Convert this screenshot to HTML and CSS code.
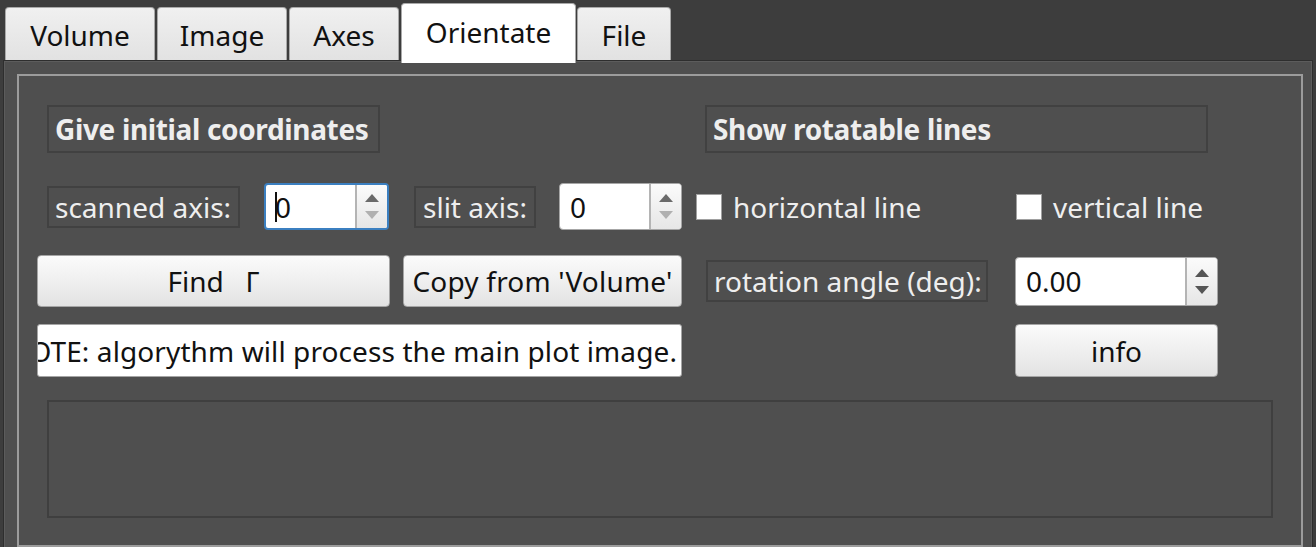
FILE: index.html
```html
<!DOCTYPE html>
<html>
<head>
<meta charset="utf-8">
<link rel="stylesheet" href="styles.css">
</head>
<body>
<div class="tabbar">
  <div class="tab t-volume">Volume</div>
  <div class="tab t-image">Image</div>
  <div class="tab t-axes">Axes</div>
  <div class="tab active t-orient">Orientate</div>
  <div class="tab t-file">File</div>
</div>
<div class="pane">
  <div class="frame">
    <div class="row r1">
      <div class="label bold lab-give">Give initial coordinates</div>
      <div class="label bold lab-show">Show rotatable lines</div>
    </div>
    <div class="row r2">
      <div class="cell">
        <div class="label lab-scan">scanned axis:</div>
        <div class="spin focus spin-a">
          <div class="spin-text"><span class="caret"></span>0</div>
          <div class="spin-btns">
            <svg class="arr" width="14" height="8" viewBox="0 0 14 8"><path d="M7 0 L14 8 L0 8 Z" fill="#6a6a6a"/></svg>
            <svg class="arr" width="14" height="8" viewBox="0 0 14 8"><path d="M0 0 L14 0 L7 8 Z" fill="#b0b0b0"/></svg>
          </div>
        </div>
      </div>
      <div class="cell">
        <div class="label lab-slit">slit axis:</div>
        <div class="spin spin-b">
          <div class="spin-text">0</div>
          <div class="spin-btns">
            <svg class="arr" width="14" height="8" viewBox="0 0 14 8"><path d="M7 0 L14 8 L0 8 Z" fill="#6a6a6a"/></svg>
            <svg class="arr" width="14" height="8" viewBox="0 0 14 8"><path d="M0 0 L14 0 L7 8 Z" fill="#b0b0b0"/></svg>
          </div>
        </div>
      </div>
      <div class="cell check check-h"><span class="box"></span>horizontal line</div>
      <div class="cell check check-v"><span class="box"></span>vertical line</div>
    </div>
    <div class="row r3">
      <div class="btn btn-find">Find   Γ</div>
      <div class="btn btn-copy">Copy from 'Volume'</div>
      <div class="cell">
        <div class="label lab-rot">rotation angle (deg):</div>
      </div>
      <div class="spin spin-c">
        <div class="spin-text">0.00</div>
        <div class="spin-btns">
          <svg class="arr" width="14" height="8" viewBox="0 0 14 8"><path d="M7 0 L14 8 L0 8 Z" fill="#555"/></svg>
          <svg class="arr" width="14" height="8" viewBox="0 0 14 8"><path d="M0 0 L14 0 L7 8 Z" fill="#555"/></svg>
        </div>
      </div>
    </div>
    <div class="row r4">
      <div class="lineedit"><span>NOTE: algorythm will process the main plot image.</span></div>
      <div class="btn btn-info">info</div>
    </div>
    <div class="group"></div>
  </div>
</div>
</body>
</html>
```
FILE: styles.css
```css
html, body {
  margin: 0;
  padding: 0;
  background: #3d3d3d;
  overflow: hidden;
  font-family: "Noto Sans", "Open Sans", sans-serif;
  font-size: 28px;
  color: #111;
}

.tabbar {
  display: flex;
  align-items: flex-end;
  height: 60px;
  padding-left: 5px;
  gap: 2px;
}

.tab {
  box-sizing: border-box;
  height: 53px;
  line-height: 54px;
  text-align: center;
  background: linear-gradient(#f0f0f0, #e2e2e2);
  border: 1px solid #a9a9a9;
  border-bottom: none;
  border-radius: 4px 4px 0 0;
  color: #111;
}

.t-volume { width: 150px; }
.t-image { width: 130px; }
.t-axes { width: 110px; }
.t-orient { width: 175px; }
.t-file { width: 94px; margin-left: -1px; }

.tab.active {
  height: 60px;
  margin-bottom: -3px;
  line-height: 56px;
  background: #ffffff;
  position: relative;
  z-index: 1;
}

.pane {
  margin-left: 3px;
  width: 1310px;
  box-sizing: border-box;
  border: 1px solid #2e2e2e;
  box-shadow: inset 1px 1px 0 #5c5c5c, inset -1px 0 0 #5c5c5c;
  background: #4f4f4f;
  padding: 13px 9px 0 13px;
}

.frame {
  box-sizing: border-box;
  height: 473px;
  border: 2px solid #9c9c9c;
  padding: 0 0 0 18px;
}

.row {
  display: grid;
  grid-template-columns: 353px 279px 307px 203px;
  column-gap: 13px;
  align-items: center;
}

.r1 { margin-top: 29px; height: 48px; }
.r2 { margin-top: 30px; height: 47px; }
.r3 { margin-top: 25px; height: 52px; }
.r4 { margin-top: 17px; height: 53px; }

.cell {
  display: flex;
  align-items: center;
  height: 100%;
}

.label {
  box-sizing: border-box;
  border: 2px solid #414141;
  color: #eeeeee;
  padding-left: 7px;
  display: flex;
  align-items: center;
  white-space: nowrap;
  height: 42px;
}

.bold {
  font-weight: bold;
  height: 48px;
  letter-spacing: -0.35px;
  padding-left: 6px;
}

.lab-give { margin-left: 10px; width: 333px; }
.lab-show { grid-column: 3 / 5; margin-left: 10px; width: 503px; }
.lab-scan { margin-left: 10px; width: 193px; padding-left: 6px; }
.lab-slit { margin-left: 11px; width: 122px; }
.lab-rot { margin-left: 11px; width: 282px; padding-left: 6px; }

.spin {
  box-sizing: border-box;
  display: flex;
  background: #ffffff;
  border: 1px solid #a6a6a6;
  border-radius: 4px;
  height: 47px;
  overflow: hidden;
}

.spin.focus {
  border: 2px solid #3b7fc0;
}

.spin-a { margin-left: auto; margin-right: 1px; width: 125px; }
.spin-b { margin-left: auto; width: 123px; }
.spin-c { width: 203px; height: 49px; }

.spin-text {
  flex: 1;
  display: flex;
  align-items: center;
  padding-left: 10px;
  color: #111;
}

.spin.focus .spin-text { padding-left: 9px; }

.caret {
  display: inline-block;
  width: 2px;
  height: 30px;
  background: #111;
  margin-right: -2px;
}

.spin-btns {
  width: 30px;
  border-left: 2px solid #b4b4b4;
  background: linear-gradient(#fbfbfb, #e6e6e6);
  display: flex;
  flex-direction: column;
  align-items: center;
  justify-content: center;
  gap: 9px;
}

.check {
  color: #eeeeee;
  gap: 11px;
}

.check-h { padding-left: 1px; }
.check-v { padding-left: 1px; }

.box {
  box-sizing: border-box;
  width: 26px;
  height: 26px;
  background: #ffffff;
  border: 1px solid #a0a0a0;
  flex: none;
}

.btn {
  box-sizing: border-box;
  height: 52px;
  display: flex;
  align-items: center;
  justify-content: center;
  background: linear-gradient(#fbfbfb, #e3e3e3);
  border: 1px solid #a5a5a5;
  border-radius: 4px;
  color: #111;
  white-space: pre;
}

.btn-copy { letter-spacing: 0.2px; }

.btn-info { grid-column: 4; height: 53px; }

.lineedit {
  grid-column: 1 / 3;
  box-sizing: border-box;
  height: 53px;
  background: #ffffff;
  border: 1px solid #a5a5a5;
  border-radius: 3px;
  display: flex;
  align-items: center;
  justify-content: flex-end;
  overflow: hidden;
  white-space: nowrap;
  padding-right: 4px;
  color: #111;
}

.lineedit span { flex: none; letter-spacing: 0.1px; }

.group {
  box-sizing: border-box;
  margin-top: 23px;
  margin-left: 10px;
  width: 1226px;
  height: 118px;
  border: 2px solid #3f3f3f;
}
```
